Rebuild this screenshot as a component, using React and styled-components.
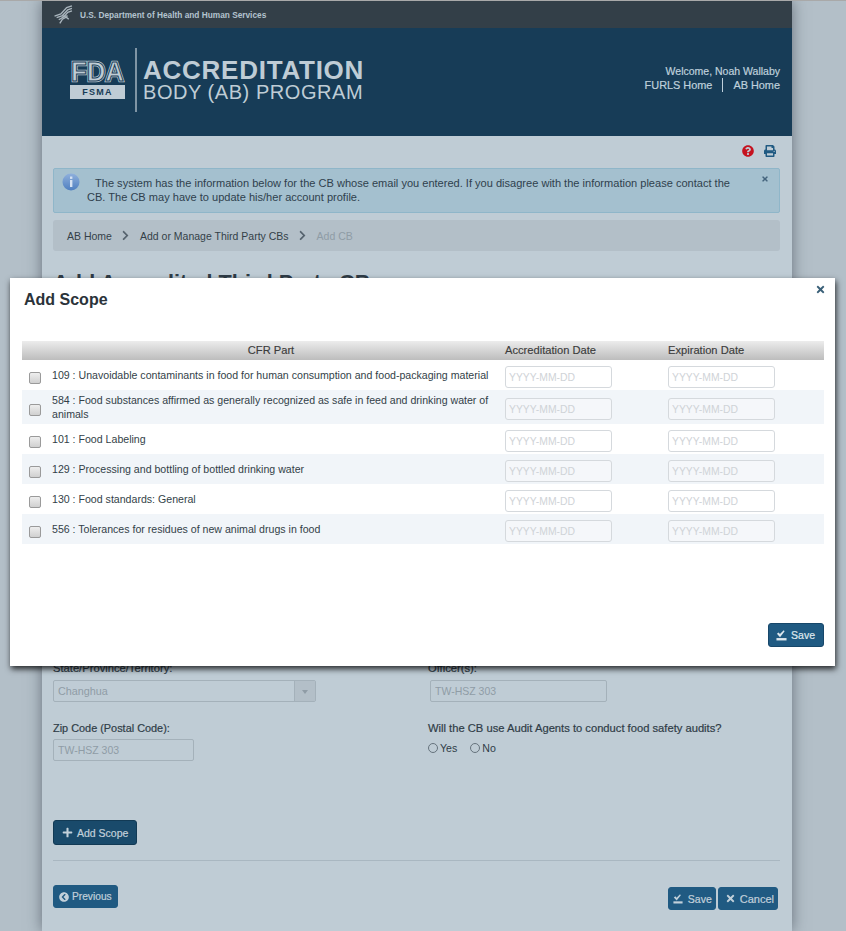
import styled, { createGlobalStyle } from "styled-components";
import {
	FaChevronCircleLeft,
	FaChevronRight,
	FaPlus,
	FaPrint,
	FaQuestionCircle,
	FaTimes,
} from "react-icons/fa";

const GlobalStyle = createGlobalStyle`
	html, body {
		margin: 0;
		padding: 0;
	}
	body {
		background-color: #b3bfc8;
		border-top: 1px solid #a9a9a9;
		font-family: "Liberation Sans", Arial, sans-serif;
		font-size: 12px;
		color: #2f3c47;
	}
`;

const Screen = styled.div`
	position: relative;
	width: 846px;
	height: 930px;
	overflow: hidden;
`;

const Wrapper = styled.div`
	width: 750px;
	height: 100%;
	margin-left: 42px;
	background-color: #bfccd5;
	box-shadow: 0 0 14px rgba(40, 50, 60, 0.55);
`;

const TopBar = styled.div`
	height: 27px;
	background-color: #333f48;
	display: flex;
	align-items: center;
	padding-left: 12px;
	gap: 7px;
	font-size: 8.3px;
	font-weight: 700;
	color: #b3c3cf;
`;

const Banner = styled.header`
	height: 108px;
	background-color: #173c57;
	display: flex;
	align-items: center;
	justify-content: space-between;
	padding: 0 12px 0 28px;
`;

const Brand = styled.div`
	display: flex;
	align-items: center;
	color: #bfccd5;
	margin-top: -5px;
`;

const Logo = styled.div`
	width: 55px;
	display: flex;
	flex-direction: column;
	gap: 3px;
`;

const FsmaTag = styled.div`
	background-color: #bfccd5;
	color: #173c57;
	height: 14px;
	line-height: 14px;
	font-size: 9px;
	font-weight: 700;
	letter-spacing: 1.3px;
	text-align: center;
`;

const BrandRule = styled.div`
	width: 2px;
	height: 64px;
	background-color: #7f95a5;
	margin: 0 6px 0 10px;
`;

const BrandTitle = styled.div`
	font-size: 26px;
	line-height: 26px;
	font-weight: 700;
	letter-spacing: 0.75px;
`;

const BrandSub = styled.div`
	margin-top: -2px;
	font-size: 20px;
	line-height: 22px;
	letter-spacing: 0.55px;
`;

const UserBox = styled.div`
	text-align: right;
	font-size: 10.9px;
	line-height: 14px;
	color: #bfd0dc;
	-webkit-text-stroke: 0.2px #bfd0dc;
	padding-bottom: 8px;
`;

const Welcome = styled.div`
	font-size: 10.5px;
`;

const UserLinks = styled.div`
	display: flex;
	justify-content: flex-end;
`;

const UserLink = styled.span`
	padding-left: ${(p) => (p.$split ? "10px" : "0")};
	margin-left: ${(p) => (p.$split ? "10px" : "0")};
	border-left: ${(p) => (p.$split ? "1px solid #bfd0dc" : "none")};
`;

const Content = styled.main`
	padding: 0 12px 0 11px;
`;

const IconRow = styled.div`
	box-sizing: border-box;
	height: 32px;
	display: flex;
	justify-content: flex-end;
	align-items: center;
	gap: 10px;
	padding: 0 4px 2px 0;
	font-size: 12px;
`;

const Alert = styled.div`
	position: relative;
	box-sizing: border-box;
	height: 45px;
	background-color: #a4c0cf;
	border: 1px solid #8fb6c9;
	border-radius: 2px;
	padding: 7px 34px 0 33px;
	font-size: 11.06px;
	line-height: 14px;
	text-indent: 8px;
	color: #2f3f4d;
`;

const AlertIcon = styled.svg`
	position: absolute;
	left: 8px;
	top: 4px;
`;

const AlertClose = styled.span`
	position: absolute;
	right: 10px;
	top: 5px;
	font-size: 8px;
	color: #44647d;
`;

const Breadcrumb = styled.nav`
	height: 31px;
	margin-top: 7px;
	background-color: #b3bfc8;
	border-radius: 3px;
	display: flex;
	align-items: center;
	padding-left: 14px;
	font-size: 10.5px;
	color: #333f48;
`;

const Crumb = styled.span`
	color: ${(p) => (p.$current ? "#8f9ca6" : "#333f48")};
`;

const CrumbArrow = styled.span`
	display: inline-flex;
	margin: 0 9px 0 8px;
	font-size: 11px;
	color: #56636e;
`;

const PageTitle = styled.h1`
	margin: 19px 0 0;
	font-size: 21.7px;
	line-height: 26px;
	font-weight: 700;
	color: #2f3c47;
`;

const FormGrid = styled.div`
	display: grid;
	grid-template-columns: 375px 1fr;
	row-gap: 20px;
	padding-top: 366px;
`;

const Field = styled.div`
	display: flex;
	flex-direction: column;
	align-items: flex-start;
`;

const Label = styled.label`
	font-size: ${(p) => p.$size || 11.2}px;
	line-height: 13px;
	-webkit-text-stroke: 0.2px #2f3c47;
	margin-bottom: ${(p) => p.$gap || 5}px;
	height: 13px;
`;

const TextInput = styled.input`
	box-sizing: border-box;
	width: ${(p) => p.$width}px;
	height: 22px;
	margin-left: ${(p) => p.$indent || 0}px;
	padding: 0 4px;
	background: transparent;
	border: 1px solid #a4b1ba;
	border-radius: 2px;
	font-family: inherit;
	font-size: 10.5px;
	color: #8f9ca6;
`;

const SelectBox = styled.div`
	box-sizing: border-box;
	width: 263px;
	height: 22px;
	border: 1px solid #a4b1ba;
	border-radius: 2px;
	display: flex;
	justify-content: space-between;
	font-size: 10.8px;
	line-height: 20px;
	color: #8f9ca6;
	padding-left: 4px;
`;

const SelectArrow = styled.div`
	width: 20px;
	border-left: 1px solid #a4b1ba;
	background-color: #b3bfc8;
	display: flex;
	align-items: center;
	justify-content: center;
	&::after {
		content: "";
		border: 3px solid transparent;
		border-top: 4px solid #8f9ca6;
		margin-top: 4px;
	}
`;

const RadioRow = styled.div`
	display: flex;
	gap: 13px;
	height: 14px;
	margin-top: 1px;
`;

const RadioLabel = styled.label`
	display: flex;
	align-items: center;
	font-size: 10.6px;
	gap: 2px;
`;

const Radio = styled.input`
	appearance: none;
	box-sizing: border-box;
	width: 10px;
	height: 10px;
	margin: 0 0 1px;
	border: 1px solid #66737d;
	border-radius: 50%;
`;

const Button = styled.button`
	display: inline-flex;
	align-items: center;
	box-sizing: border-box;
	height: ${(p) => p.$height || 23}px;
	gap: ${(p) => p.$gap}px;
	padding: 0 ${(p) => p.$padRight}px 0 ${(p) => p.$padLeft}px;
	background-color: ${(p) => p.$bg || "#205a82"};
	border: 1px solid ${(p) => p.$border || p.$bg || "#205a82"};
	border-radius: 3px;
	color: ${(p) => p.$fg || "#c2d0da"};
	font-family: inherit;
	font-size: ${(p) => p.$size || 10.5}px;
	-webkit-text-stroke: 0.2px ${(p) => p.$fg || "#c2d0da"};
`;

const AddRow = styled.div`
	margin-top: 59px;
	padding-bottom: 15px;
	border-bottom: 1px solid #a9b7c1;
	display: flex;
`;

const Footer = styled.div`
	display: flex;
	justify-content: space-between;
	align-items: flex-start;
	margin-top: 24px;
	padding-right: 2px;
`;

const FooterRight = styled.div`
	display: flex;
	gap: 2px;
	margin-top: 2px;
`;

const Modal = styled.section`
	position: absolute;
	left: 10px;
	top: 277px;
	width: 825px;
	height: 388px;
	box-sizing: border-box;
	background-color: #ffffff;
	box-shadow: 1px 3px 6px rgba(0, 0, 0, 0.8);
	padding: 0 11px 0 12px;
	display: flex;
	flex-direction: column;
`;

const ModalTitle = styled.h2`
	margin: 12px 0 0 2px;
	height: 51px;
	font-size: 16px;
	line-height: 20px;
	font-weight: 700;
	color: #2b333a;
`;

const ModalClose = styled.span`
	position: absolute;
	right: 9px;
	top: 6px;
	font-size: 11px;
	color: #3a6078;
`;

const TableHead = styled.div`
	display: grid;
	box-sizing: border-box;
	grid-template-columns: 483px 163px 156px;
	height: 19px;
	padding-bottom: 1px;
	align-items: center;
	background: linear-gradient(#ececec, #bdbdbd);
	font-size: 11.15px;
	color: #3c3c3c;
	-webkit-text-stroke: 0.15px #3c3c3c;
`;

const HeadCell = styled.div`
	text-align: ${(p) => (p.$center ? "center" : "left")};
	padding-left: ${(p) => (p.$center ? "15px" : "0")};
`;

const Row = styled.div`
	display: grid;
	grid-template-columns: 30px 453px 163px 156px;
	min-height: 30px;
	align-items: center;
	background-color: ${(p) => (p.$striped ? "#f1f5f9" : "#ffffff")};
`;

const CheckBox = styled.input`
	appearance: none;
	box-sizing: border-box;
	width: 12px;
	height: 12px;
	margin: 6px 0 0 7px;
	border: 1px solid #9a9a9a;
	border-radius: 2px;
	background: linear-gradient(#eeeeee, #d0d0d0);
`;

const RowText = styled.div`
	padding: 3px 0;
	font-size: 10.6px;
	line-height: 14px;
	color: #333f48;
`;

const DateInput = styled.input`
	display: block;
	box-sizing: border-box;
	width: 107px;
	height: 22px;
	margin-top: 4px;
	padding: 0 3px;
	background: ${(p) => (p.$striped ? "#f5f7fa" : "#ffffff")};
	border: 1px solid #d5d9dd;
	border-radius: 3px;
	font-family: inherit;
	font-size: 10.4px;
	&::placeholder {
		color: #cfd3d7;
	}
`;

const ModalFooter = styled.div`
	margin-top: auto;
	padding-bottom: 19px;
	display: flex;
	justify-content: flex-end;
`;

const Mark = styled.svg`
	overflow: visible;
`;

function SaveIcon({ size = 12 }) {
	return (
		<svg width={size} height={size} viewBox="0 0 12 12" fill="currentColor">
			<path d="M1 4.2 2.8 2.6 4.3 4.4 8.4 0.4 9.4 1.4 4.4 7.8z" />
			<rect x="0.5" y="8.8" width="11" height="2.6" />
		</svg>
	);
}

function HhsEagle() {
	return (
		<svg width="19" height="19" viewBox="0 0 18 18" fill="none" stroke="#a9b5bd" strokeWidth="1.3">
			<path d="M0.5 10.5 6.5 8.5 12 2.5 17 0.8" />
			<path d="M2.5 12 8 10 13 4.5 17 3.2" />
			<path d="M4.5 14 9.5 11 13 7 17 5.6" />
			<path d="M5.5 17.5 8 13.5 11.5 11.5 14 13.5" />
			<path d="M8 10.5 13 10.5" />
		</svg>
	);
}

// Layered strokes give the striped letter look of the FDA mark, the letters stay real text
function FdaMark() {
	const letters = {
		x: 1,
		y: 21,
		fontFamily: "Liberation Sans",
		fontWeight: 700,
		fontSize: 27,
		textLength: 53,
		lengthAdjust: "spacingAndGlyphs",
	};
	return (
		<Mark width="55" height="22" viewBox="0 0 55 22">
			<text {...letters} fill="#bfccd5" stroke="#bfccd5" strokeWidth="2.4">
				FDA
			</text>
			<text {...letters} fill="#bfccd5" stroke="#173c57" strokeWidth="1">
				FDA
			</text>
		</Mark>
	);
}

function InfoIcon() {
	return (
		<AlertIcon width="18" height="18" viewBox="0 0 18 18">
			<defs>
				<linearGradient id="infoFill" x1="0" y1="0" x2="0" y2="1">
					<stop offset="0" stopColor="#8fb0dc" />
					<stop offset="1" stopColor="#4f7fc0" />
				</linearGradient>
			</defs>
			<circle cx="9" cy="9" r="8.5" fill="url(#infoFill)" />
			<rect x="8" y="3.5" width="2.4" height="2.4" fill="#d6e2f2" />
			<rect x="8" y="7" width="2.4" height="7" fill="#d6e2f2" />
		</AlertIcon>
	);
}

const scopes = [
	"109 : Unavoidable contaminants in food for human consumption and food-packaging material",
	"584 : Food substances affirmed as generally recognized as safe in feed and drinking water of animals",
	"101 : Food Labeling",
	"129 : Processing and bottling of bottled drinking water",
	"130 : Food standards: General",
	"556 : Tolerances for residues of new animal drugs in food",
];

function App() {
	return (
		<Screen>
			<GlobalStyle />
			<Wrapper>
				<TopBar>
					<HhsEagle />
					U.S. Department of Health and Human Services
				</TopBar>
				<Banner>
					<Brand>
						<Logo>
							<FdaMark />
							<FsmaTag>FSMA</FsmaTag>
						</Logo>
						<BrandRule />
						<div>
							<BrandTitle>ACCREDITATION</BrandTitle>
							<BrandSub>BODY (AB) PROGRAM</BrandSub>
						</div>
					</Brand>
					<UserBox>
						<Welcome>Welcome, Noah Wallaby</Welcome>
						<UserLinks>
							<UserLink>FURLS Home</UserLink>
							<UserLink $split>AB Home</UserLink>
						</UserLinks>
					</UserBox>
				</Banner>
				<Content>
					<IconRow>
						<FaQuestionCircle color="#c5121f" />
						<FaPrint color="#205a82" />
					</IconRow>
					<Alert>
						<InfoIcon />
						<AlertClose>
							<FaTimes />
						</AlertClose>
						The system has the information below for the CB whose email you entered. If you disagree with the
						information please contact the CB. The CB may have to update his/her account profile.
					</Alert>
					<Breadcrumb>
						<Crumb>AB Home</Crumb>
						<CrumbArrow>
							<FaChevronRight />
						</CrumbArrow>
						<Crumb>Add or Manage Third Party CBs</Crumb>
						<CrumbArrow>
							<FaChevronRight />
						</CrumbArrow>
						<Crumb $current>Add CB</Crumb>
					</Breadcrumb>
					<PageTitle>Add Accredited Third Party CB</PageTitle>
					<FormGrid>
						<Field>
							<Label>State/Province/Territory:</Label>
							<SelectBox>
								Changhua
								<SelectArrow />
							</SelectBox>
						</Field>
						<Field>
							<Label>Officer(s):</Label>
							<TextInput $width={177} $indent={2} defaultValue="TW-HSZ 303" disabled />
						</Field>
						<Field>
							<Label $size={10.9} $gap={4}>
								Zip Code (Postal Code):
							</Label>
							<TextInput $width={141} defaultValue="TW-HSZ 303" disabled />
						</Field>
						<Field>
							<Label>Will the CB use Audit Agents to conduct food safety audits?</Label>
							<RadioRow>
								<RadioLabel>
									<Radio type="radio" name="agents" />
									Yes
								</RadioLabel>
								<RadioLabel>
									<Radio type="radio" name="agents" />
									No
								</RadioLabel>
							</RadioRow>
						</Field>
					</FormGrid>
					<AddRow>
						<Button $height={25} $bg="#194a6b" $border="#123a55" $gap={4} $padLeft={8} $padRight={8}>
							<FaPlus size={11} />
							Add Scope
						</Button>
					</AddRow>
					<Footer>
						<Button $size={10.2} $gap={3} $padLeft={5} $padRight={5}>
							<FaChevronCircleLeft size={10} />
							Previous
						</Button>
						<FooterRight>
							<Button $gap={5} $padLeft={4} $padRight={3}>
								<SaveIcon size={10} />
								Save
							</Button>
							<Button $size={11} $gap={4} $padLeft={6} $padRight={3}>
								<FaTimes size={11} />
								Cancel
							</Button>
						</FooterRight>
					</Footer>
				</Content>
			</Wrapper>
			<Modal>
				<ModalTitle>Add Scope</ModalTitle>
				<ModalClose>
					<FaTimes />
				</ModalClose>
				<TableHead>
					<HeadCell $center>CFR Part</HeadCell>
					<HeadCell>Accreditation Date</HeadCell>
					<HeadCell>Expiration Date</HeadCell>
				</TableHead>
				{scopes.map((scope, i) => {
					const striped = i % 2 === 1;
					return (
						<Row key={scope} $striped={striped}>
							<CheckBox type="checkbox" />
							<RowText>{scope}</RowText>
							<div>
								<DateInput $striped={striped} placeholder="YYYY-MM-DD" />
							</div>
							<div>
								<DateInput $striped={striped} placeholder="YYYY-MM-DD" />
							</div>
						</Row>
					);
				})}
				<ModalFooter>
					<Button $bg="#205a82" $border="#17476a" $fg="#dfe8ee" $height={24} $gap={4} $padLeft={7} $padRight={8}>
						<SaveIcon size={11} />
						Save
					</Button>
				</ModalFooter>
			</Modal>
		</Screen>
	);
}

export default App;
